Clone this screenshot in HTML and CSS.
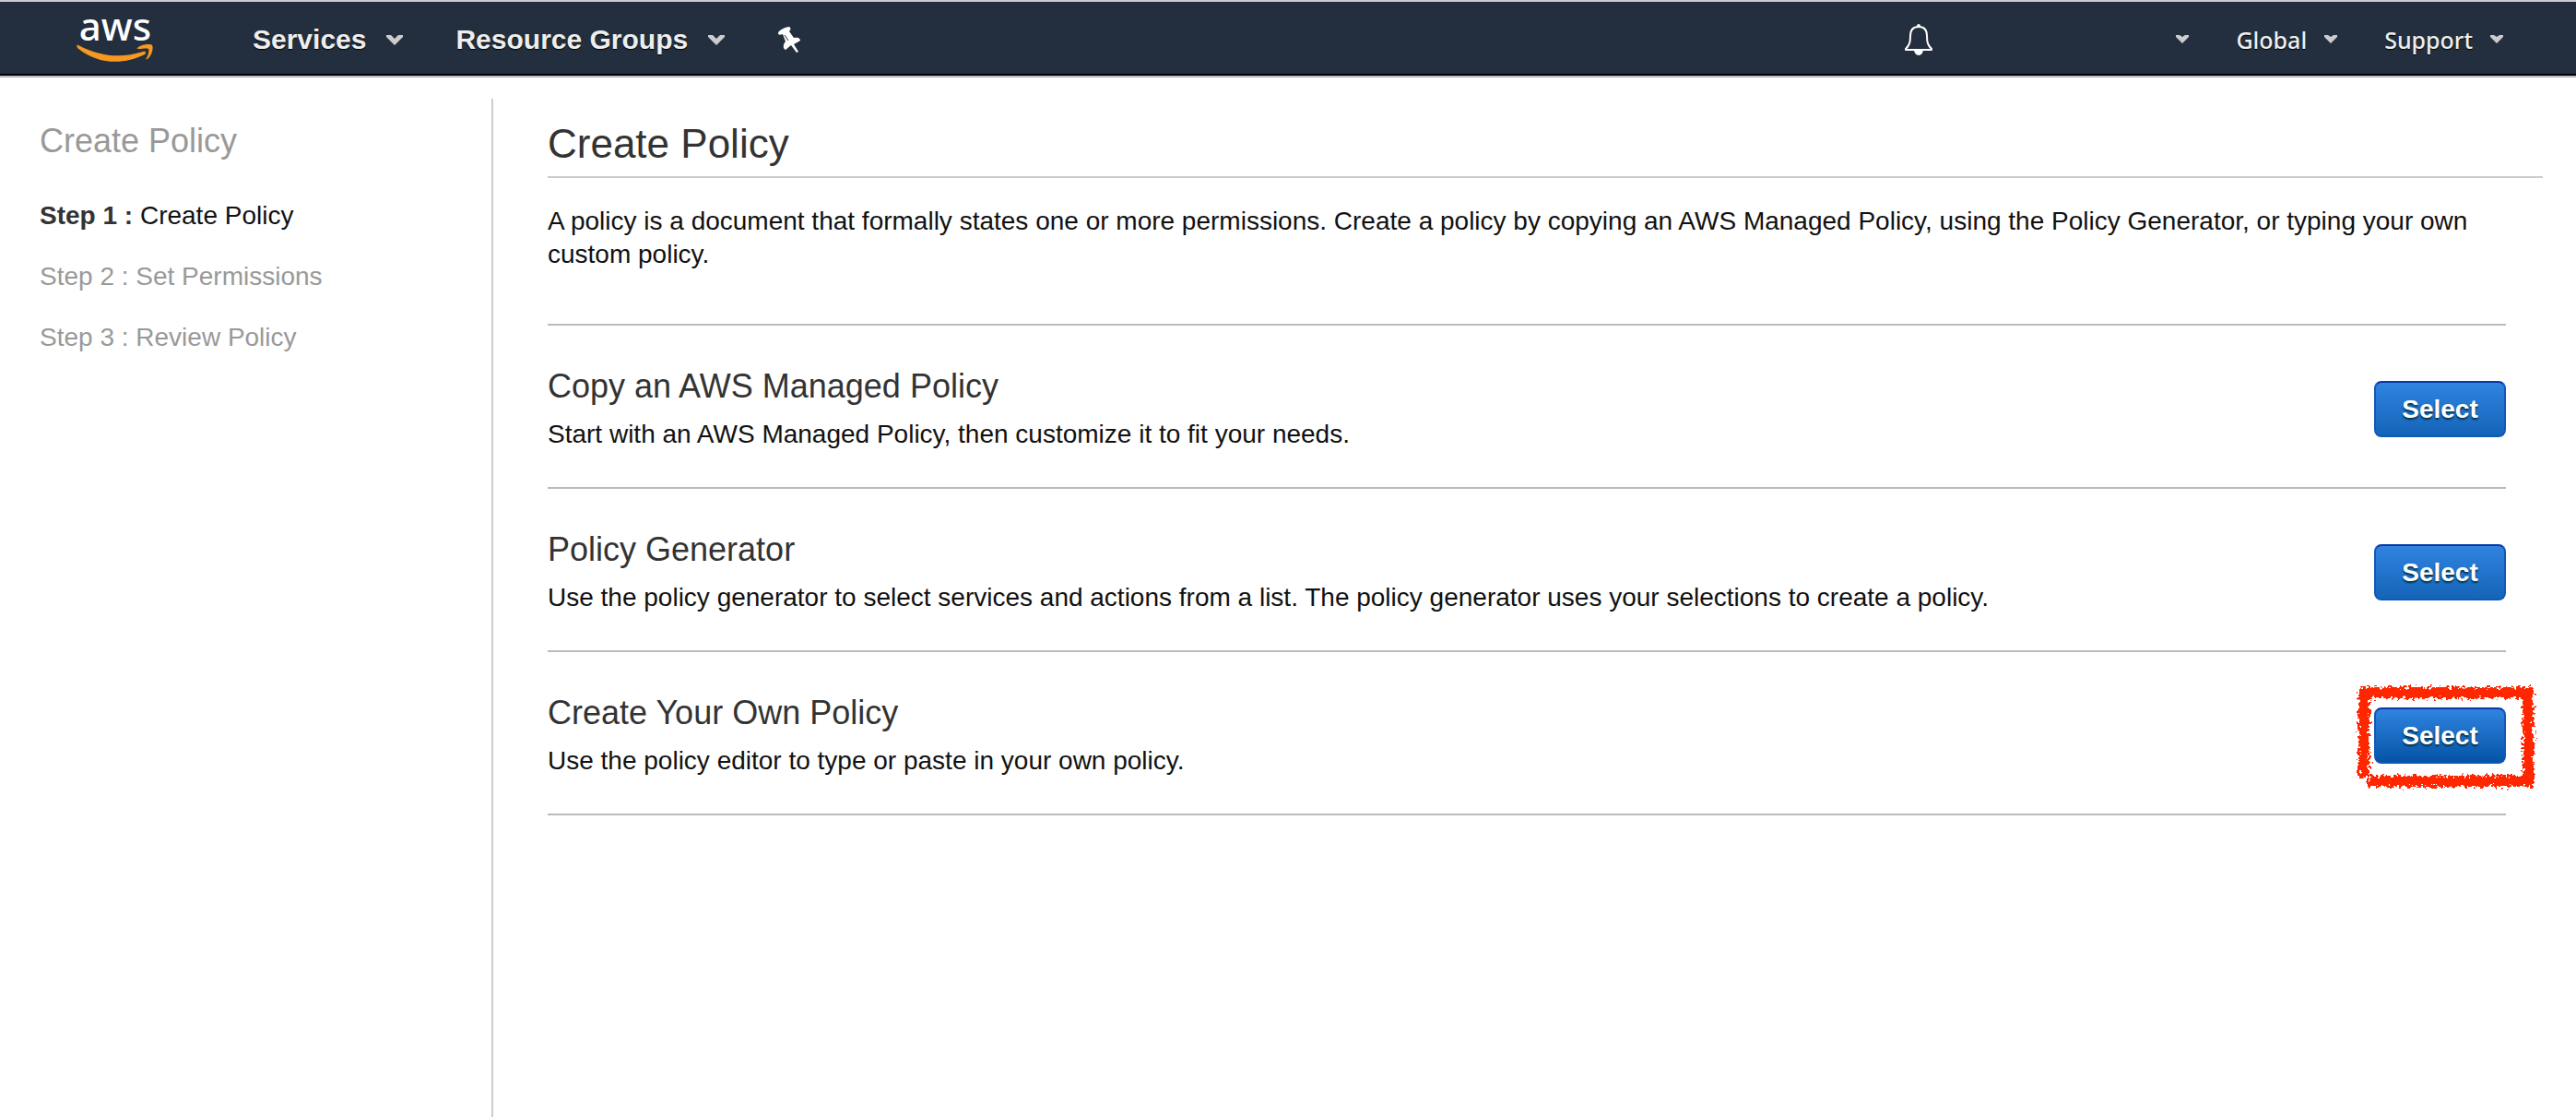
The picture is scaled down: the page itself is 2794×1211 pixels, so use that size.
FILE: index.html
```html
<!DOCTYPE html>
<html lang="en">
<head>
<meta charset="utf-8">
<title>Create Policy</title>
<link rel="stylesheet" href="styles.css">
</head>
<body>
<header class="topbar">
  <a class="logo" href="#" aria-label="aws home">
    <span class="logo-word">aws</span>
    <svg class="logo-smile" viewBox="0 0 84 20" width="84" height="20" aria-hidden="true">
      <path fill="#f7981f" d="M2 1C26 14 50 15 72 8c3-1 4 1 2 3C52 22 24 23 1 4 0 2 0 0 2 1z"/>
      <path fill="#f7981f" d="M66 4c4-4 14-5 16-3 2 4-1 12-5 15-2 1-2 0-1-1 2-4 3-8 2-10-2-1-7 0-10 0-2 0-3 0-2-1z"/>
    </svg>
  </a>
  <nav class="nav-main">
    <button class="nav-item" type="button">Services <svg class="caret" viewBox="0 0 20 12" aria-hidden="true"><path d="M1 1h5l4 4 4-4h5v2l-9 9-9-9z"/></svg></button>
    <button class="nav-item" type="button">Resource Groups <svg class="caret" viewBox="0 0 20 12" aria-hidden="true"><path d="M1 1h5l4 4 4-4h5v2l-9 9-9-9z"/></svg></button>
    <button class="nav-item" type="button" aria-label="Pin shortcuts"><svg viewBox="0 0 26 28" width="26" height="28" aria-hidden="true"><path fill="#fff" d="M1 7C1 4 9 0 13 0c2 1 2 3 0 5l5 7c4-1 7 0 7 3l-7 4 5 8-2 1-6-8-6 5c-3-1-3-6 0-9L6 8C3 9 1 9 1 7z"/><path d="M8 9l4 6" stroke="#232f3e"/></svg></button>
  </nav>
  <nav class="nav-side">
    <button class="nav-item bell" type="button" aria-label="Notifications"><svg viewBox="0 0 32 36" width="32" height="36" aria-hidden="true"><path fill="none" stroke="#fff" stroke-width="2" stroke-linejoin="round" d="M16 4c-6 0-9 4-9 10 0 7-1 10-5 14v1h28v-1c-4-4-5-7-5-14 0-6-3-10-9-10z"/><path fill="#fff" d="M14 4a2 3 0 0 1 4 0zM11 29h10a5 6 0 0 1-10 0z"/></svg></button>
    <button class="nav-item" type="button" aria-label="Account"><svg class="caret-small" viewBox="0 0 16 10" aria-hidden="true"><path d="M1 0h4l3 2 3-2h4v2L8 9 1 2z"/></svg></button>
    <button class="nav-item" type="button">Global <svg class="caret-small" viewBox="0 0 16 10" aria-hidden="true"><path d="M1 0h4l3 2 3-2h4v2L8 9 1 2z"/></svg></button>
    <button class="nav-item" type="button">Support <svg class="caret-small" viewBox="0 0 16 10" aria-hidden="true"><path d="M1 0h4l3 2 3-2h4v2L8 9 1 2z"/></svg></button>
  </nav>
</header>
<div class="page">
  <aside class="steps">
    <h2 class="steps-title">Create Policy</h2>
    <ol class="steps-list">
      <li class="step current"><b>Step 1 :</b> Create Policy</li>
      <li class="step">Step 2 : Set Permissions</li>
      <li class="step">Step 3 : Review Policy</li>
    </ol>
  </aside>
  <main class="content">
    <h1 class="title">Create Policy</h1>
    <p class="intro">A policy is a document that formally states one or more permissions. Create a policy by copying an AWS Managed Policy, using the Policy Generator, or typing your own custom policy.</p>
    <div class="options">
      <section class="option">
        <div>
          <h2 class="option-title">Copy an AWS Managed Policy</h2>
          <p class="option-text">Start with an AWS Managed Policy, then customize it to fit your needs.</p>
        </div>
        <button class="select" type="button">Select</button>
      </section>
      <section class="option">
        <div>
          <h2 class="option-title">Policy Generator</h2>
          <p class="option-text">Use the policy generator to select services and actions from a list. The policy generator uses your selections to create a policy.</p>
        </div>
        <button class="select" type="button">Select</button>
      </section>
      <section class="option">
        <div>
          <h2 class="option-title">Create Your Own Policy</h2>
          <p class="option-text">Use the policy editor to type or paste in your own policy.</p>
        </div>
        <div class="marked">
          <button class="select pressed" type="button">Select</button>
          <svg class="marker" viewBox="0 0 200 120" width="200" height="120" aria-hidden="true">
            <filter id="chalk" x="0" y="0" width="200" height="120" filterUnits="userSpaceOnUse">
              <feTurbulence type="fractalNoise" baseFrequency="0.3" numOctaves="2" seed="4"/>
              <feDisplacementMap in="SourceGraphic" scale="12" xChannelSelector="R" yChannelSelector="G"/>
            </filter>
            <path filter="url(#chalk)" fill="none" stroke="#ff2600" stroke-width="12" d="M11 104V12H189V108H15"/>
          </svg>
        </div>
      </section>
    </div>
  </main>
</div>
</body>
</html>
```
FILE: styles.css
```css
* {
  box-sizing: border-box;
}

body {
  display: flex;
  flex-direction: column;
  min-height: 100vh;
  margin: 0;
  background: #fff;
  color: #111;
  font: 28px/36px "Liberation Sans", Arial, sans-serif;
}

h1,
h2,
p,
ol {
  margin: 0;
  padding: 0;
  font-weight: 400;
}

button {
  border: 0;
  cursor: pointer;
}

.topbar {
  display: flex;
  align-items: center;
  height: 82px;
  padding: 3px 78px 0 83px;
  border-top: 2px solid #ccc;
  border-bottom: 2px solid #000;
  background: #232f3e;
  box-shadow: 0 2px 1px #bbb;
}

.logo {
  display: flex;
  flex-direction: column;
  align-items: center;
  gap: 10px;
  width: 84px;
  color: #fff;
  text-decoration: none;
}

.logo-word {
  font: 500 42px/20px "Noto Sans", sans-serif;
}

.logo-smile {
  display: block;
}

.nav-main,
.nav-side {
  display: flex;
  align-items: center;
}

.nav-main {
  gap: 56px;
  margin-left: 107px;
}

.nav-side {
  gap: 50px;
  margin-left: auto;
}

.nav-item {
  display: flex;
  align-items: center;
  gap: 21px;
  padding: 0;
  background: none;
  color: #eee;
  font: 700 30px/36px "Liberation Sans", Arial, sans-serif;
  text-shadow: 0 1px 1px #000;
}

.nav-side .nav-item {
  gap: 18px;
  font: 500 25px/36px "Noto Sans", sans-serif;
}

.nav-side .bell {
  margin-right: 212px;
}

.caret {
  width: 20px;
  height: 12px;
  fill: #ccc;
}

.caret-small {
  width: 16px;
  height: 10px;
  fill: #ccc;
}

.page {
  display: flex;
  flex: 1;
  padding-top: 25px;
}

.steps {
  flex: 0 0 535px;
  padding: 28px 43px;
  border-right: 2px solid #ccc;
  color: #999;
}

.steps-title {
  margin-bottom: 45px;
  font-size: 36px;
  line-height: 36px;
}

.steps-list {
  display: flex;
  flex-direction: column;
  gap: 30px;
  list-style: none;
}

.current {
  color: #111;
}

.current b {
  color: #333;
}

.content {
  flex: 1;
  padding: 25px 36px 0 59px;
}

.title {
  padding-bottom: 11px;
  border-bottom: 2px solid #ccc;
  color: #333;
  font-size: 44px;
  line-height: 48px;
}

.intro {
  padding: 29px 30px 57px 0;
}

.options {
  margin-right: 40px;
  border-top: 2px solid #bbb;
}

.option {
  display: flex;
  align-items: center;
  justify-content: space-between;
  padding: 44px 0 39px;
  border-bottom: 2px solid #bbb;
}

.option-title {
  margin-bottom: 12px;
  color: #333;
  font-size: 36px;
  line-height: 44px;
}

.select {
  display: block;
  width: 143px;
  height: 61px;
  padding: 2px 0 0;
  border: 2px solid #1059b5;
  border-top-color: #0a36a8;
  border-radius: 8px;
  background: linear-gradient(#3084e0, #1464b8);
  color: #fff;
  font: 700 28px/36px "Liberation Sans", Arial, sans-serif;
  text-shadow: 0 2px 2px #034;
}

.pressed {
  background: linear-gradient(#3084e0, #0453a6);
}

.marked {
  position: relative;
}

.marker {
  position: absolute;
  top: -28px;
  left: -22px;
  pointer-events: none;
}
```
